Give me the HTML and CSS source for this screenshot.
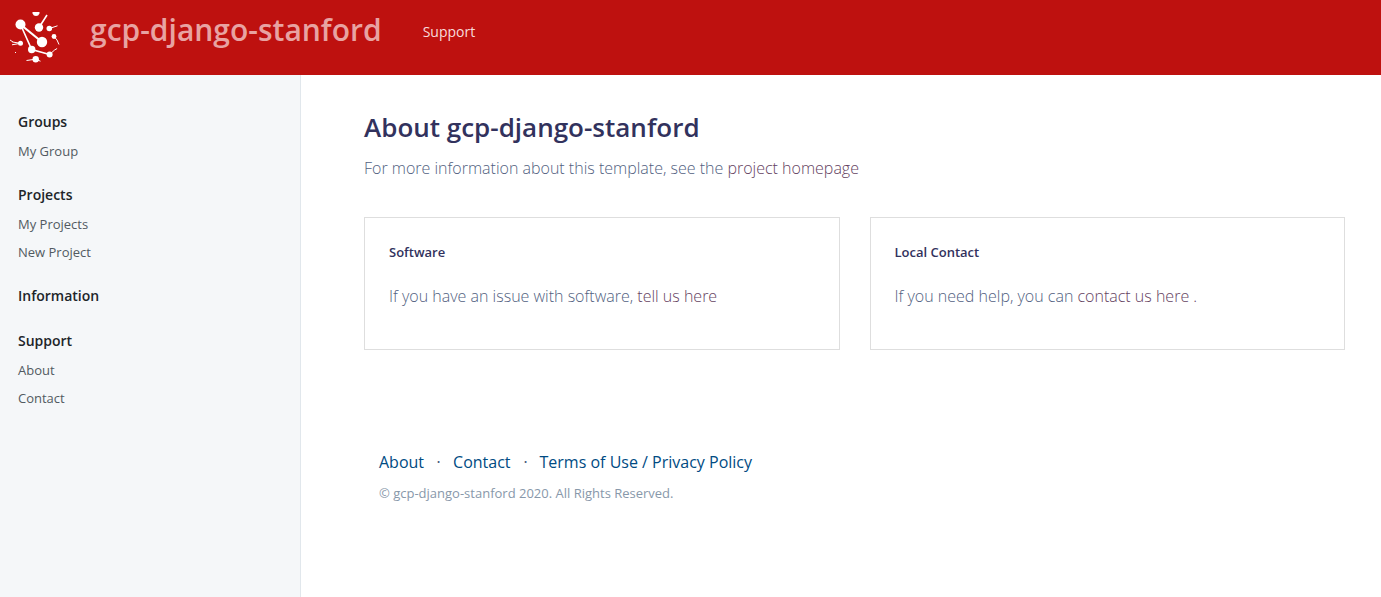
FILE: index.html
```html
<!DOCTYPE html>
<html lang="en">
<head>
<meta charset="utf-8">
<title>About gcp-django-stanford</title>
<link rel="stylesheet" href="styles.css">
</head>
<body>
<header class="topbar">
  <a class="logo" href="#" aria-label="Home">
    <svg viewBox="0 0 60 60" width="60" height="60" fill="#fff" stroke="#fff" aria-hidden="true">
      <g stroke="none">
        <circle cx="15.500" cy="19.500" r="5"/>
        <circle cx="34" cy="22.500" r="4.200"/>
        <circle cx="44.300" cy="23.500" r="2.800"/>
        <circle cx="49" cy="31.500" r="2.400"/>
        <circle cx="37" cy="37" r="5.200"/>
        <circle cx="26.700" cy="44.500" r="3.700"/>
        <circle cx="44.600" cy="49.500" r="3"/>
        <circle cx="15.500" cy="38.300" r="2.500"/>
        <circle cx="30.700" cy="54.200" r="3.200"/>
        <path d="M27.500 7h7v1.500q-1 2.500-3.500 2.500t-3.500-2.500zM10 47h1v1h-1z"/>
      </g>
      <g fill="none">
        <path stroke-width="2.200" d="M15.500 19.500 37 37"/>
        <path stroke-width="1.600" d="M15.500 19.500 26.700 44.500 44.600 49.500M34 22.500 42 10"/>
        <path d="M44.300 23.500 52.500 20.800M49 31.500 52 35l2 4.500M44.600 49.500l5-4.500 2.500-1.500M15.500 38.300l-8-1.300M15.500 38.300 7 39.800M8 37l-3-2M21.500 55.500l9-1.300 5 2"/>
      </g>
    </svg>
  </a>
  <a class="brand" href="#">gcp-django-stanford</a>
  <nav class="topnav"><a href="#">Support</a></nav>
</header>
<div class="layout">
  <nav class="sidebar">
    <section class="group"><h2>Groups</h2>
      <ul><li><a href="#">My Group</a></li></ul></section>
    <section class="group"><h2>Projects</h2>
      <ul><li><a href="#">My Projects</a></li><li><a href="#">New Project</a></li></ul></section>
    <section class="group"><h2>Information</h2></section>
    <section class="group"><h2>Support</h2>
      <ul><li><a href="#">About</a></li><li><a href="#">Contact</a></li></ul></section>
  </nav>
  <main class="content">
    <h1>About gcp-django-stanford</h1>
    <p class="lead">For more information about this template, see the <a href="#">project homepage</a></p>
    <div class="cards">
      <section class="card">
        <h3>Software</h3>
        <p>If you have an issue with software, <a href="#">tell us here</a></p>
      </section>
      <section class="card">
        <h3>Local Contact</h3>
        <p>If you need help, you can <a href="#">contact us here .</a></p>
      </section>
    </div>
    <footer class="footer">
      <ul class="links"><li><a href="#">About</a></li><li class="dot">⋅</li><li><a href="#">Contact</a></li><li class="dot">⋅</li><li><a href="#">Terms of Use / Privacy Policy</a></li></ul>
      <p>© gcp-django-stanford 2020. All Rights Reserved.</p>
    </footer>
  </main>
</div>
</body>
</html>
```
FILE: styles.css
```css
* { box-sizing: border-box; }
body {
  margin: 0;
  min-height: 100vh;
  display: flex;
  flex-direction: column;
  font-family: "Open Sans", sans-serif;
  font-size: 16px;
  line-height: 24px;
  color: #525f7f;
  background: #fff;
}
h1, h2, h3, p, ul { margin: 0; padding: 0; }
ul { list-style: none; }
a { color: inherit; text-decoration: none; }

.topbar {
  display: flex;
  align-items: flex-start;
  height: 75px;
  padding: 5px;
  background: #be110f;
}
.logo { display: block; line-height: 0; }
.brand {
  margin-left: 25px;
  font-size: 30px;
  line-height: 50px;
  font-weight: 600;
  color: #e8a3a2;
}
.topnav {
  margin-left: 41px;
  font-size: 14px;
  line-height: 54px;
  color: #f8dcdc;
}

.layout { flex: 1; display: grid; grid-template-columns: 301px 1fr; }
.sidebar {
  padding: 35px 18px;
  background: #f5f7f9;
  border-right: 1px solid #e1e7ec;
}
.group { margin-bottom: 21px; }
.group h2 {
  font-size: 14px;
  line-height: 24px;
  font-weight: 600;
  color: #212529;
}
.group ul { padding-top: 3px; }
.group li {
  font-size: 13px;
  line-height: 28px;
  color: #525a61;
}
.group:has(ul) { margin-bottom: 18px; }

.content { padding: 35px 36px 36px 63px; }
h1 {
  font-size: 26px;
  line-height: 34px;
  font-weight: 600;
  color: #32325d;
}
.lead { margin-top: 12px; font-weight: 300; }
.lead a, .card a { color: #65435f; }
.cards {
  display: grid;
  grid-template-columns: 1fr 1fr;
  gap: 30px;
  margin-top: 37px;
}
.card {
  padding: 22px 24px 41px;
  border: 1px solid #dedede;
}
.card h3 {
  font-size: 13px;
  line-height: 24px;
  font-weight: 600;
  color: #32325d;
}
.card p { margin-top: 20px; font-weight: 300; }

.footer { margin-top: 100px; padding: 0 15px; }
.links { display: flex; color: #004b83; }
.links .dot { margin: 0 12px; color: #525f7f; }
.footer p {
  margin-top: 8px;
  font-size: 13px;
  line-height: 22px;
  color: #8898aa;
}
```
